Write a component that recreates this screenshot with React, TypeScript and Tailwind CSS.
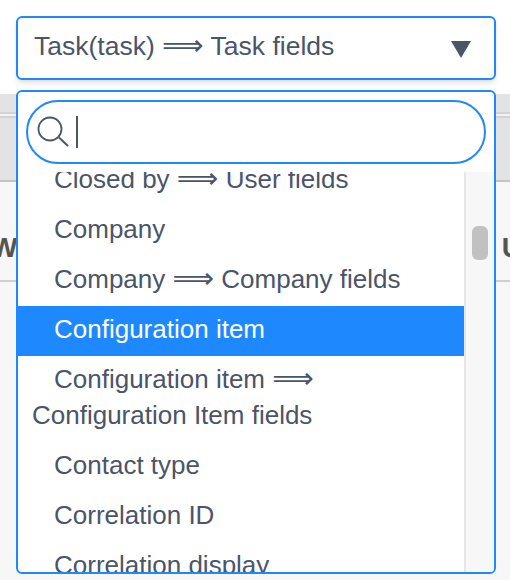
import React from "react";

const Arrow = () => <span className="text-[29px] leading-none">⟹</span>;

const options = [
  { id: "closed", label: <>Closed by <Arrow /> User fields</> },
  { id: "company", label: "Company" },
  { id: "company-fields", label: <>Company <Arrow /> Company fields</> },
  { id: "ci", label: "Configuration item", active: true },
  { id: "ci-fields", label: <>Configuration item <Arrow /> Configuration Item fields</> },
  { id: "contact", label: "Contact type" },
  { id: "corr-id", label: "Correlation ID" },
  { id: "corr-display", label: "Correlation display" },
];

export default function App() {
  return (
    <div className="relative w-[510px] h-[580px] overflow-hidden bg-[#f7f7f7] text-[26px] text-[#4a5568] font-['Liberation_Sans','DejaVu_Sans',sans-serif]">
      {/* select trigger */}
      <div className="h-[94px] bg-white pt-[16px] pl-[16px]">
        <div className="w-[480px] h-[64px] bg-white border-2 border-[#1e88ff] rounded-[6px] shadow-md flex items-center justify-between pl-[16px] pr-[23px]">
          <span className="text-[26.5px] pb-[2px]">Task(task) <Arrow /> Task fields</span>
          <svg className="mt-[2px]" width="20" height="17" viewBox="0 0 20 17"><path d="M0 0h20L10 17z" fill="#4a5568" /></svg>
        </div>
      </div>

      {/* page behind the dropdown */}
      <div className="h-[18px] bg-[#e3e3e3]" />
      <div className="h-[6px] bg-[#f2f2f2] border-y-2 border-[#d2d2d2]" />
      <div className="h-[64px] bg-[#e3e3e3] border-b-2 border-[#c4c4c4]" />
      <div className="h-[100px] flex justify-between items-end pb-[11px] border-b-2 border-[#cfcfcf] font-bold text-[28px] text-[#555]">
        <span className="-ml-[9px]">W</span>
        <span className="-mr-[12px]">U</span>
      </div>

      {/* dropdown */}
      <div className="absolute left-[16px] top-[90px] w-[480px] h-[484px] bg-white border-2 border-[#1e88ff] rounded-[6px] overflow-hidden flex flex-col">
        <div className="h-[80px] shrink-0 p-[8px]">
          <div className="h-[64px] border-2 border-[#1e88ff] rounded-full flex items-center pl-[9px]">
            <svg width="32" height="32" viewBox="0 0 32 32" fill="none" stroke="#4a5568" strokeWidth="1.8">
              <circle cx="13" cy="13" r="11.5" />
              <path d="M22 21.5l9 8.5" strokeWidth="2" />
            </svg>
            <span className="ml-[7px] w-[2px] h-[32px] bg-[#4a5568]" />
          </div>
        </div>
        <div className="flex-1 min-h-0 flex">
          <div className="flex-1 min-w-0 overflow-hidden">
            <div className="-mt-[16px]">
              {options.map((o) => (
                <div
                  key={o.id}
                  className={
                    o.active
                      ? "pt-[5px] pb-[9px] pl-[14px] indent-[22px] leading-[36px] bg-[#1e88ff] text-white"
                      : "pt-[5px] pb-[9px] pl-[14px] indent-[22px] leading-[36px]"
                  }
                >
                  {o.label}
                </div>
              ))}
            </div>
          </div>
          <div className="w-[30px] shrink-0 bg-[#f7f7f7] border-l-2 border-[#e6e6e6] pl-[6px] pt-[54px]">
            <div className="w-[16px] h-[34px] rounded-[6px] bg-[#c1c1c1]" />
          </div>
        </div>
      </div>
    </div>
  );
}
